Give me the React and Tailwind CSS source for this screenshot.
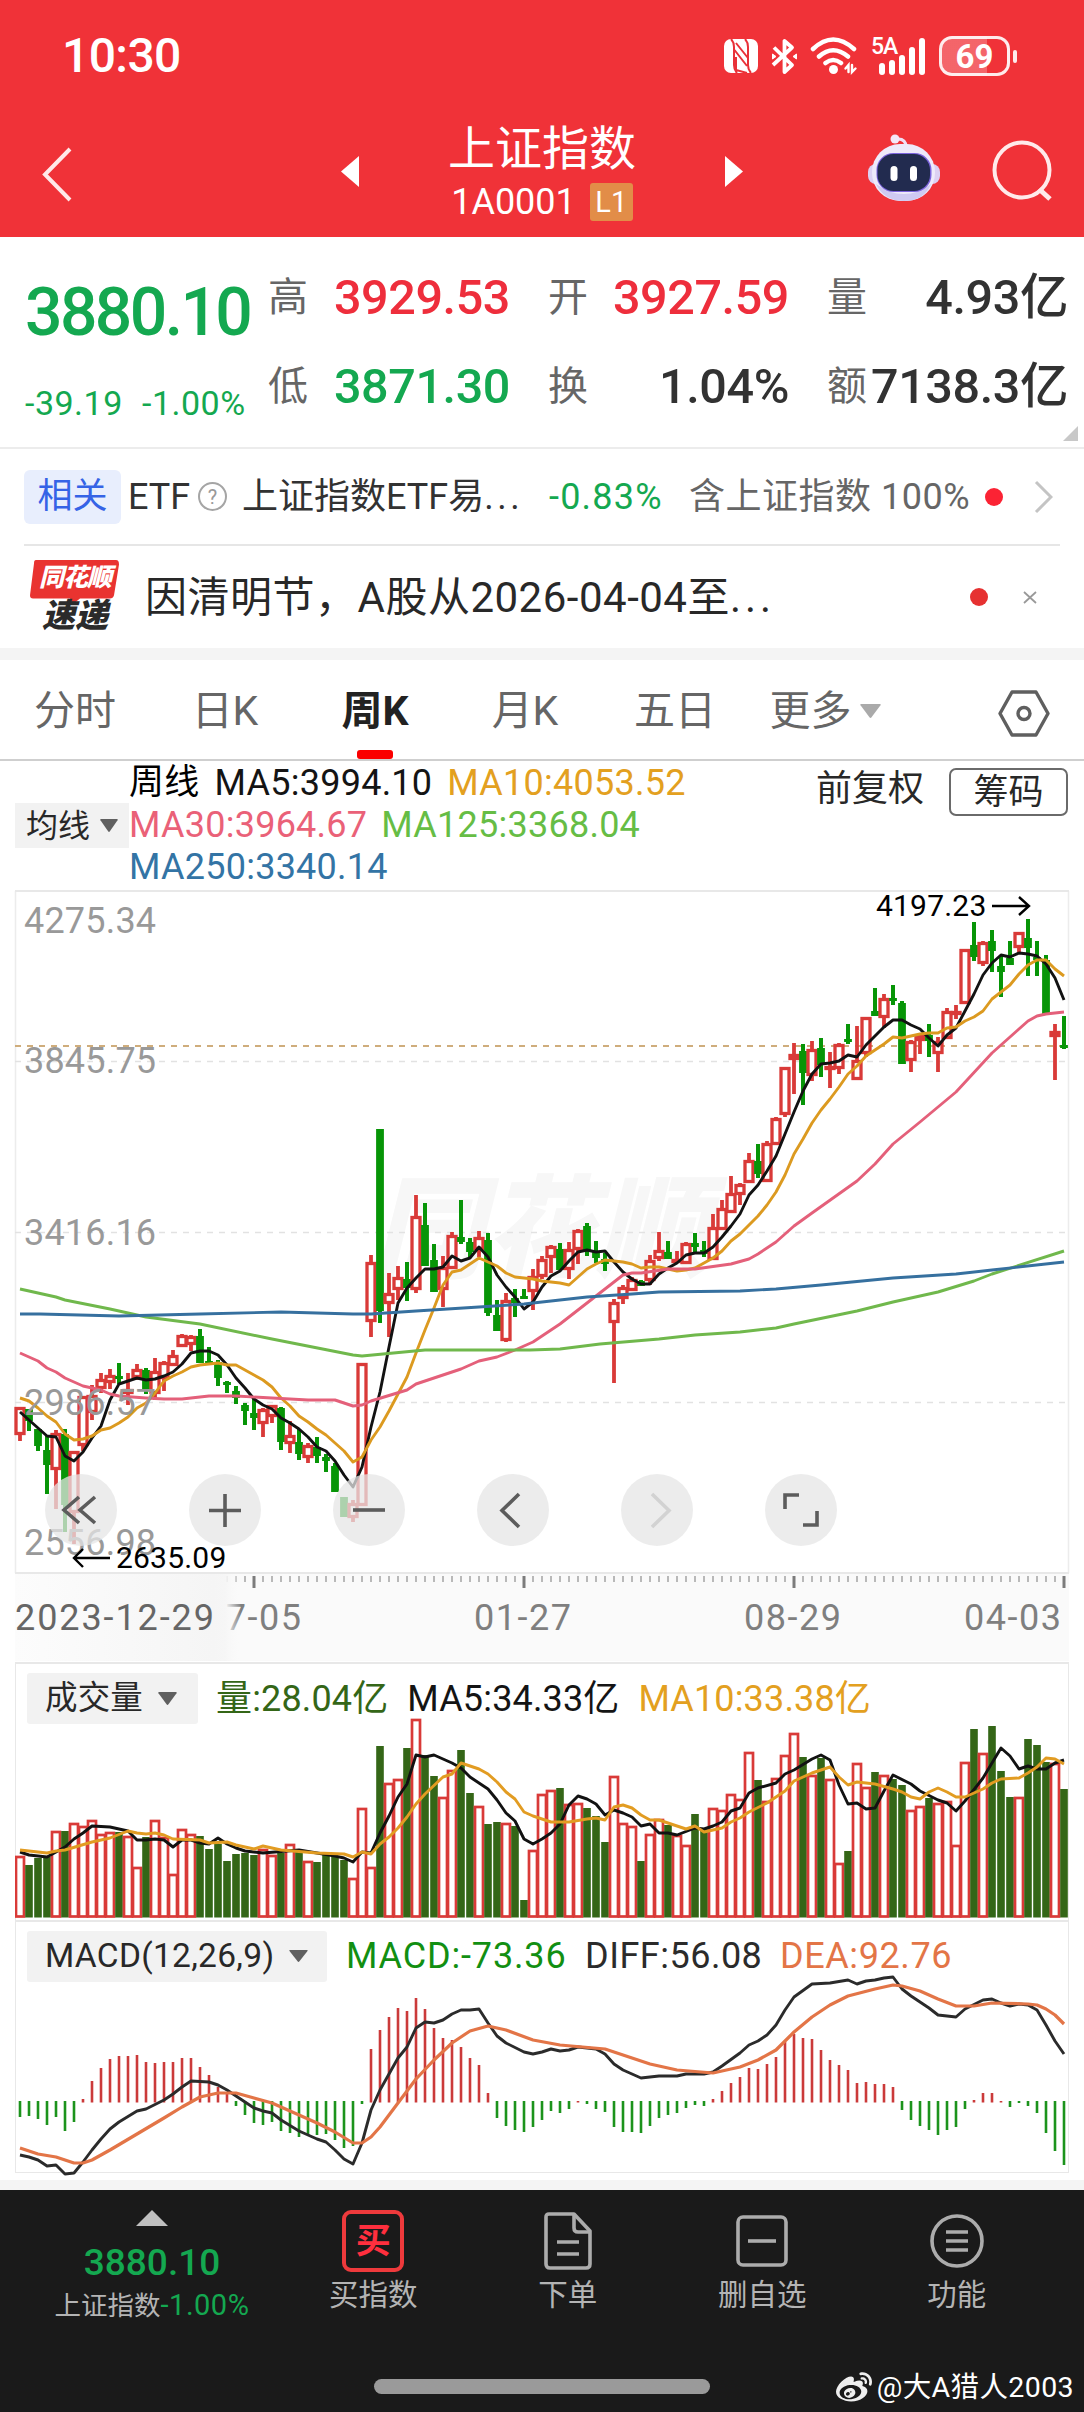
import React from 'react'
import { FaWeibo } from 'react-icons/fa'

// every chart shares the same x axis: 117 weeks, 9px apart
const STEP = 9
const xAt = (i) => 20 + i * STEP
const RED = '#d93a38'
const GREEN = '#079507'

// [up, high, bodyTop, bodyBottom, low]
const candles = [
  [1, 1408, 1408, 1434, 1441], [0, 1409, 1409, 1421, 1431], [0, 1429, 1429, 1446, 1451], [0, 1436, 1450, 1465, 1494],
  [1, 1430, 1434, 1469, 1509], [0, 1429, 1434, 1505, 1532], [1, 1451, 1452, 1512, 1544], [1, 1396, 1397, 1445, 1451],
  [1, 1385, 1396, 1412, 1420], [1, 1373, 1380, 1388, 1393], [1, 1369, 1376, 1382, 1389], [0, 1363, 1376, 1378, 1384],
  [1, 1373, 1390, 1393, 1405], [1, 1364, 1370, 1377, 1380], [0, 1368, 1370, 1389, 1394], [1, 1358, 1372, 1393, 1400],
  [1, 1361, 1363, 1378, 1391], [1, 1350, 1356, 1365, 1365], [1, 1334, 1336, 1346, 1347], [1, 1335, 1337, 1344, 1351],
  [0, 1329, 1336, 1363, 1363], [0, 1347, 1361, 1363, 1363], [0, 1360, 1362, 1378, 1386], [0, 1381, 1382, 1384, 1393],
  [0, 1386, 1391, 1398, 1404], [0, 1403, 1405, 1411, 1425], [0, 1398, 1413, 1418, 1430], [1, 1408, 1410, 1423, 1437],
  [1, 1405, 1406, 1416, 1423], [0, 1407, 1408, 1442, 1450], [1, 1421, 1436, 1443, 1453], [0, 1429, 1442, 1454, 1460],
  [1, 1443, 1446, 1457, 1463], [0, 1437, 1447, 1456, 1463], [0, 1454, 1457, 1461, 1472], [0, 1463, 1466, 1492, 1492],
  [0, 1497, 1497, 1517, 1517], [1, 1500, 1504, 1517, 1522], [1, 1363, 1364, 1505, 1505], [1, 1255, 1263, 1321, 1337],
  [0, 1129, 1129, 1311, 1323], [1, 1273, 1294, 1303, 1337], [1, 1266, 1278, 1289, 1300], [0, 1262, 1279, 1288, 1301],
  [1, 1195, 1217, 1289, 1293], [0, 1203, 1225, 1266, 1266], [0, 1244, 1260, 1292, 1292], [1, 1256, 1268, 1289, 1307],
  [1, 1232, 1236, 1268, 1268], [0, 1200, 1237, 1242, 1244], [0, 1238, 1242, 1252, 1258], [1, 1231, 1238, 1249, 1257],
  [0, 1233, 1240, 1313, 1316], [0, 1300, 1315, 1331, 1331], [1, 1293, 1301, 1340, 1342], [0, 1289, 1298, 1303, 1317],
  [0, 1289, 1296, 1299, 1299], [1, 1269, 1277, 1291, 1310], [1, 1256, 1260, 1276, 1279], [1, 1245, 1247, 1257, 1273],
  [0, 1243, 1249, 1270, 1270], [1, 1242, 1250, 1269, 1279], [1, 1229, 1231, 1249, 1264], [0, 1223, 1226, 1252, 1256],
  [0, 1241, 1252, 1258, 1263], [0, 1253, 1259, 1264, 1271], [1, 1299, 1303, 1322, 1383], [1, 1285, 1288, 1298, 1304],
  [1, 1277, 1280, 1290, 1290], [0, 1280, 1281, 1286, 1286], [1, 1255, 1261, 1280, 1285], [1, 1232, 1251, 1258, 1261],
  [0, 1241, 1252, 1259, 1259], [1, 1251, 1260, 1262, 1262], [1, 1242, 1244, 1263, 1263], [0, 1233, 1243, 1247, 1252],
  [0, 1241, 1250, 1254, 1257], [1, 1214, 1228, 1259, 1259], [1, 1200, 1209, 1229, 1229], [1, 1176, 1194, 1212, 1212],
  [1, 1183, 1185, 1194, 1205], [1, 1153, 1161, 1182, 1182], [0, 1144, 1161, 1174, 1178], [1, 1141, 1144, 1181, 1181],
  [1, 1117, 1119, 1144, 1145], [1, 1067, 1068, 1114, 1117], [1, 1043, 1055, 1059, 1094], [0, 1044, 1051, 1073, 1105],
  [1, 1041, 1050, 1075, 1081], [0, 1038, 1048, 1065, 1077], [1, 1052, 1067, 1069, 1088], [1, 1043, 1045, 1068, 1074],
  [0, 1024, 1039, 1042, 1044], [1, 1026, 1061, 1079, 1079], [1, 1017, 1018, 1053, 1057], [0, 988, 1011, 1016, 1016],
  [1, 994, 999, 1017, 1028], [0, 985, 998, 1001, 1005], [0, 1001, 1003, 1064, 1064], [1, 1040, 1042, 1060, 1072],
  [1, 1033, 1036, 1040, 1054], [0, 1024, 1035, 1041, 1057], [1, 1037, 1042, 1053, 1072], [1, 1008, 1012, 1038, 1038],
  [1, 1005, 1012, 1013, 1019], [1, 949, 950, 1003, 1004], [0, 922, 945, 957, 961], [1, 941, 943, 963, 966],
  [0, 930, 941, 951, 972], [0, 955, 966, 972, 997], [0, 941, 958, 965, 965], [1, 932, 933, 947, 954],
  [0, 919, 938, 948, 976], [0, 941, 957, 959, 976], [0, 955, 960, 1015, 1015], [1, 1024, 1032, 1036, 1080],
  [0, 1016, 1045, 1047, 1049],
]

const ma5 = [
  1412, 1420, 1428, 1436, 1437, 1456, 1461, 1452, 1438, 1426, 1400, 1384, 1381, 1378, 1380, 1379, 1376, 1372, 1364, 1353,
  1351, 1351, 1355, 1365, 1378, 1388, 1399, 1405, 1409, 1418, 1423, 1429, 1437, 1447, 1451, 1461, 1475, 1487, 1467, 1427,
  1392, 1347, 1303, 1288, 1278, 1269, 1269, 1267, 1256, 1261, 1258, 1247, 1257, 1275, 1287, 1297, 1309, 1302, 1287, 1276,
  1271, 1261, 1252, 1250, 1252, 1251, 1262, 1272, 1279, 1284, 1284, 1274, 1268, 1263, 1255, 1253, 1253, 1247, 1237, 1226,
  1214, 1195, 1185, 1171, 1156, 1134, 1112, 1091, 1074, 1064, 1063, 1061, 1055, 1057, 1045, 1036, 1027, 1020, 1020, 1025,
  1029, 1038, 1046, 1035, 1028, 1011, 994, 975, 963, 955, 957, 953, 954, 956, 964, 978, 1000,
]

const ma10 = [
  1398, 1401, 1408, 1416, 1422, 1434, 1440, 1439, 1436, 1430, 1428, 1423, 1417, 1408, 1403, 1393, 1381, 1376, 1372, 1367,
  1365, 1364, 1363, 1365, 1365, 1370, 1375, 1380, 1387, 1398, 1406, 1416, 1422, 1429, 1435, 1443, 1451, 1462, 1457, 1440,
  1427, 1411, 1394, 1377, 1353, 1330, 1308, 1285, 1272, 1270, 1264, 1258, 1262, 1266, 1273, 1277, 1278, 1279, 1281, 1282,
  1283, 1285, 1277, 1269, 1264, 1260, 1261, 1262, 1264, 1268, 1267, 1267, 1269, 1271, 1270, 1268, 1263, 1258, 1251, 1241,
  1234, 1225, 1216, 1205, 1192, 1175, 1154, 1139, 1123, 1110, 1099, 1087, 1074, 1066, 1056, 1050, 1044, 1037, 1038, 1036,
  1034, 1033, 1033, 1028, 1027, 1021, 1017, 1011, 999, 992, 985, 974, 965, 960, 960, 969, 976,
]

const ma30 = '20,1353 38,1361 47,1368 56,1372 65,1378 83,1386 101,1390 110,1394 119,1396 146,1398 164,1399 182,1399 209,1396 236,1396 272,1398 308,1400 335,1400 344,1403 353,1406 362,1405 371,1401 407,1390 416,1384 425,1381 461,1369 479,1361 497,1357 515,1350 533,1342 560,1324 623,1275 632,1273 641,1273 668,1269 695,1269 731,1264 749,1259 758,1254 776,1242 794,1226 812,1213 857,1181 875,1164 893,1144 920,1122 956,1092 992,1053 1010,1037 1028,1021 1037,1016 1046,1014 1064,1012'
const ma125 = '20,1289 56,1297 65,1300 110,1309 146,1317 200,1324 272,1339 353,1355 362,1356 425,1350 452,1350 530,1350 560,1349 600,1344 659,1339 695,1335 740,1332 776,1328 794,1324 857,1311 893,1302 938,1292 974,1281 992,1274 1064,1251'
const ma250 = '20,1314 40,1314 119,1316 200,1314 281,1312 353,1314 371,1314 416,1311 479,1307 524,1304 587,1297 632,1294 659,1292 740,1291 776,1289 821,1285 893,1278 956,1274 992,1270 1064,1262'

const volumes = [
  1856, 1865, 1858, 1857, 1831, 1831, 1823, 1826, 1820, 1834, 1832, 1832, 1836, 1867, 1837, 1820, 1837, 1874, 1829, 1834,
  1836, 1849, 1844, 1861, 1854, 1853, 1855, 1849, 1855, 1853, 1844, 1851, 1861, 1862, 1855, 1856, 1860, 1878, 1808, 1867,
  1746, 1783, 1779, 1748, 1719, 1755, 1776, 1797, 1770, 1750, 1793, 1806, 1824, 1822, 1823, 1826, 1900, 1850, 1794, 1790,
  1788, 1804, 1803, 1808, 1816, 1842, 1776, 1823, 1826, 1861, 1834, 1819, 1825, 1835, 1845, 1814, 1829, 1808, 1810, 1794,
  1799, 1752, 1780, 1801, 1778, 1755, 1733, 1757, 1775, 1758, 1779, 1863, 1851, 1763, 1787, 1772, 1775, 1779, 1785, 1810,
  1806, 1798, 1803, 1801, 1845, 1762, 1729, 1753, 1726, 1771, 1797, 1797, 1739, 1745, 1762, 1763, 1789,
]

const volMa5 = [
  [0, 1852], [1, 1855], [2, 1856], [3, 1857], [4, 1852], [5, 1847], [6, 1839], [7, 1833], [8, 1826], [10, 1827], [11, 1829],
  [12, 1831], [13, 1840], [14, 1840], [15, 1839], [16, 1840], [17, 1847], [18, 1840], [19, 1840], [20, 1843], [21, 1844],
  [22, 1838], [23, 1844], [24, 1848], [25, 1851], [27, 1853], [31, 1850], [33, 1853], [35, 1856], [36, 1858], [37, 1862],
  [38, 1852], [39, 1853], [40, 1833], [41, 1816], [42, 1797], [43, 1784], [44, 1755], [45, 1757], [46, 1755], [48, 1763],
  [49, 1768], [50, 1777], [52, 1789], [53, 1800], [54, 1813], [55, 1821], [56, 1839], [57, 1844], [58, 1839], [59, 1833],
  [60, 1824], [61, 1805], [62, 1796], [63, 1799], [64, 1804], [65, 1815], [66, 1810], [67, 1813], [68, 1817], [69, 1826],
  [70, 1824], [71, 1833], [72, 1833], [73, 1835], [75, 1828], [76, 1829], [77, 1826], [78, 1822], [79, 1811], [80, 1808],
  [81, 1793], [82, 1788], [84, 1783], [85, 1774], [86, 1770], [88, 1759], [89, 1755], [90, 1760], [91, 1785], [92, 1804],
  [93, 1803], [94, 1809], [95, 1808], [96, 1791], [97, 1775], [99, 1784], [100, 1791], [102, 1800], [103, 1803], [104, 1811],
  [105, 1801], [107, 1778], [108, 1763], [109, 1748], [110, 1756], [111, 1769], [112, 1766], [113, 1769], [114, 1769],
  [115, 1763], [116, 1760],
]
const volMa10 = [
  [0, 1850], [3, 1853], [4, 1851], [5, 1850], [8, 1842], [10, 1838], [12, 1831], [13, 1833], [14, 1834], [15, 1833],
  [16, 1835], [17, 1839], [20, 1840], [21, 1843], [23, 1842], [24, 1845], [25, 1847], [26, 1849], [27, 1846], [29, 1850],
  [33, 1853], [36, 1854], [37, 1857], [38, 1852], [39, 1854], [40, 1844], [41, 1837], [42, 1828], [43, 1817], [44, 1804],
  [45, 1794], [47, 1777], [48, 1774], [49, 1763], [51, 1769], [52, 1774], [53, 1782], [54, 1792], [55, 1799], [56, 1812],
  [57, 1816], [59, 1822], [61, 1822], [63, 1819], [64, 1818], [65, 1820], [66, 1807], [67, 1805], [68, 1808], [69, 1815],
  [70, 1820], [71, 1820], [74, 1829], [75, 1826], [76, 1832], [78, 1828], [79, 1822], [80, 1818], [81, 1812], [83, 1803],
  [84, 1797], [85, 1791], [86, 1781], [88, 1773], [90, 1767], [91, 1777], [92, 1785], [93, 1782], [95, 1784], [97, 1789],
  [98, 1792], [99, 1797], [100, 1799], [101, 1792], [102, 1788], [103, 1792], [104, 1797], [105, 1797], [107, 1789],
  [108, 1783], [109, 1779], [111, 1778], [112, 1773], [113, 1767], [114, 1758], [115, 1759], [116, 1764],
]

const macd = [
  2117, 2116, 2119, 2125, 2117, 2131, 2122, 2099, 2081, 2068, 2059, 2056, 2056, 2055, 2062, 2063, 2062, 2062, 2058, 2058,
  2067, 2075, 2087, 2093, 2106, 2115, 2123, 2125, 2122, 2131, 2133, 2137, 2135, 2135, 2134, 2140, 2148, 2146, 2104, 2049,
  2030, 2017, 2008, 2011, 1998, 2009, 2028, 2038, 2040, 2047, 2058, 2065, 2093, 2118, 2126, 2130, 2132, 2127, 2120, 2111,
  2113, 2109, 2101, 2104, 2109, 2112, 2127, 2132, 2132, 2133, 2126, 2118, 2115, 2113, 2108, 2105, 2106, 2099, 2091, 2083,
  2077, 2068, 2069, 2064, 2057, 2042, 2034, 2038, 2039, 2050, 2060, 2065, 2070, 2083, 2082, 2084, 2084, 2087, 2110, 2120,
  2126, 2130, 2135, 2130, 2127, 2109, 2100, 2093, 2093, 2101, 2107, 2103, 2106, 2113, 2133, 2151, 2165,
]
const diff = [
  [0, 2155], [1, 2157], [2, 2160], [3, 2166], [4, 2165], [5, 2174], [6, 2173], [7, 2162], [8, 2150], [9, 2139], [10, 2129],
  [11, 2122], [13, 2111], [14, 2109], [16, 2100], [17, 2094], [18, 2087], [19, 2081], [21, 2082], [22, 2085], [23, 2090],
  [24, 2096], [25, 2102], [26, 2108], [27, 2111], [28, 2113], [29, 2120], [31, 2131], [33, 2139], [34, 2142], [35, 2150],
  [36, 2159], [37, 2164], [38, 2143], [39, 2110], [40, 2090], [42, 2058], [43, 2047], [44, 2028], [45, 2022], [46, 2023],
  [47, 2020], [48, 2014], [49, 2010], [50, 2010], [51, 2009], [52, 2023], [53, 2036], [54, 2043], [56, 2052], [57, 2054],
  [58, 2052], [59, 2049], [60, 2051], [61, 2050], [62, 2047], [64, 2049], [65, 2054], [66, 2064], [67, 2070], [69, 2078],
  [71, 2076], [73, 2076], [74, 2074], [76, 2074], [77, 2072], [78, 2066], [80, 2053], [81, 2045], [82, 2041], [83, 2035],
  [84, 2025], [85, 2010], [86, 1997], [88, 1984], [90, 1983], [92, 1980], [93, 1984], [94, 1981], [95, 1980], [96, 1978],
  [97, 1977], [98, 1989], [99, 1996], [101, 2008], [102, 2015], [103, 2016], [104, 2017], [105, 2009], [107, 2000],
  [108, 1999], [109, 2003], [110, 2006], [111, 2004], [112, 2005], [113, 2010], [114, 2025], [115, 2041], [116, 2054],
]
const dea = [
  [0, 2148], [2, 2154], [4, 2157], [6, 2163], [7, 2163], [8, 2160], [10, 2150], [13, 2134], [16, 2118], [18, 2107],
  [20, 2097], [22, 2093], [24, 2093], [26, 2098], [28, 2103], [30, 2111], [33, 2123], [35, 2132], [37, 2143], [38, 2143],
  [39, 2137], [40, 2127], [42, 2103], [44, 2079], [46, 2060], [48, 2043], [50, 2031], [52, 2026], [54, 2030], [57, 2040],
  [60, 2045], [65, 2049], [67, 2055], [70, 2064], [73, 2070], [77, 2073], [80, 2067], [82, 2060], [84, 2050], [86, 2032],
  [88, 2017], [90, 2005], [92, 1996], [95, 1989], [97, 1985], [98, 1986], [100, 1991], [102, 1999], [104, 2006],
  [106, 2006], [108, 2003], [112, 2004], [113, 2005], [114, 2009], [115, 2015], [116, 2024],
]

const toPoints = (list) => list.map((p, i) => (Array.isArray(p) ? `${xAt(p[0])},${p[1]}` : `${xAt(i)},${p}`)).join(' ')

const Line = ({ points, color, width = 2.9 }) => (
  <polyline points={points} fill="none" stroke={color} strokeWidth={width} strokeLinejoin="round" />
)

const Caret = ({ className }) => (
  <svg className={className} viewBox="0 0 20 13" fill="currentColor" preserveAspectRatio="none" aria-hidden="true">
    <path d="M1 0h18q1.200 0 .5 1.200L11 12.300q-1 1.200-2 0L.5 1.200Q-.2 0 1 0z" />
  </svg>
)

const StatusBar = () => (
  <div className="flex h-[112px] items-center justify-between pl-[62px] pr-[67px] text-white">
    <span className="text-[48px] leading-none font-medium tracking-[-0.600px]">10:30</span>
    <div className="flex h-[42px] items-center">
      {/* NFC */}
      <svg className="h-[34px] w-[34px]" viewBox="0 0 34 34" aria-hidden="true">
        <rect x="0" y="0" width="34" height="34" rx="7" fill="#fff" />
        <path d="M7 0q3 3 3 8v18q0 5 3 8M27 34q-3-3-3-8V8q0-5-3-8M12 4l12 15M10.500 11L23 27M12 18v13l11 3" stroke="#e93138" strokeWidth="2" fill="none" />
      </svg>
      {/* Bluetooth */}
      <svg className="ml-[13px] h-[37px] w-[27px]" viewBox="0 0 27 37" fill="none" stroke="#fff" strokeWidth="3.800" aria-hidden="true">
        <path d="M2 27L21 9.500 13.500 3v31l7.500-7L3 9.500" strokeLinejoin="round" />
        <path d="M1.500 16l3.500 2.500L1.500 21zM25.500 16L22 18.500l3.500 2.500z" fill="#fff" strokeWidth="1" />
      </svg>
      {/* Wi-Fi */}
      <svg className="ml-[12px] h-[38px] w-[48px]" viewBox="0 0 48 38" fill="none" stroke="#fff" strokeWidth="4.500" strokeLinecap="round" aria-hidden="true">
        <path d="M3 12Q23-7 44 12M9 19.500Q23 7 38 19.500M15.500 26Q23 20 31 26" />
        <circle cx="23.500" cy="32.500" r="4.500" fill="#fff" stroke="none" />
        <path d="M38.500 35v-7l-3 3.500M42 28v7l3.500-3.500" strokeWidth="2.400" />
      </svg>
      {/* Signal */}
      <div className="relative ml-[13px] flex h-[38px] w-[54px] items-end justify-end gap-[4px]">
        <span className="absolute -top-[1px] left-0 text-[23px] leading-[22px] font-medium tracking-[-1px]">5A</span>
        <i className="h-[12px] w-[6px] rounded-full bg-white" />
        <i className="h-[15px] w-[6px] rounded-full bg-white" />
        <i className="h-[20px] w-[6px] rounded-full bg-white" />
        <i className="h-[28px] w-[6px] rounded-full bg-white" />
        <i className="h-[37px] w-[6px] rounded-full bg-white" />
      </div>
      {/* Battery */}
      <div className="ml-[14px] flex h-[40px] w-[71px] items-center justify-center rounded-[13px] border-[3px] border-white/90 bg-linear-to-r from-white/25 from-69% to-transparent to-69%">
        <span className="text-[33px] leading-none font-bold">69</span>
      </div>
      <i className="ml-[3px] h-[13px] w-[4px] rounded-full bg-white/90" />
    </div>
  </div>
)

const Robot = () => (
  <svg className="h-[70px] w-[74px]" viewBox="0 0 74 70" aria-hidden="true">
    <path d="M39 13q0-8-8-8" stroke="#f0dff4" strokeWidth="3" fill="none" />
    <circle cx="28" cy="5" r="4.500" fill="#f4e7f7" />
    <rect x="1" y="30" width="72" height="20" rx="8" fill="#dcd0f3" />
    <rect x="5" y="10" width="63" height="57" rx="28" fill="#eeeafa" />
    <path d="M9 50q28 20 55 0-7 17-27 17T9 50z" fill="#cfcaf2" />
    <rect x="9.500" y="19" width="55" height="39" rx="17" fill="#7b63dd" />
    <rect x="10.500" y="20" width="52.500" height="37" rx="16" fill="#222b4f" />
    <rect x="23.500" y="32" width="7" height="15" rx="3.500" fill="#fff" />
    <rect x="43" y="32" width="7" height="15" rx="3.500" fill="#fff" />
  </svg>
)

const TitleBar = () => (
  <div className="flex h-[125px] text-white">
    <svg className="mt-[34px] ml-[41px] h-[57px] w-[32px]" viewBox="0 0 32 57" fill="none" stroke="#ffe9e9" strokeWidth="4" aria-hidden="true">
      <path d="M29 3L4 28.500 29 54" />
    </svg>
    <svg className="mt-[44px] ml-[268px] h-[31px] w-[18px]" viewBox="0 0 18 31" fill="#fff" aria-hidden="true">
      <path d="M18 0v31L0 15.500z" />
    </svg>
    <div className="flex w-[366px] flex-col items-center pt-[11px]">
      <h1 className="text-[47px] leading-[52px]">上证指数</h1>
      <div className="mt-[8px] flex items-center gap-[14px]">
        <span className="text-[36px] leading-[38px]">1A0001</span>
        <span className="flex h-[38px] w-[43px] items-center justify-center rounded-[3px] bg-[#e28d48] text-[29px] leading-none">L1</span>
      </div>
    </div>
    <svg className="mt-[44px] h-[31px] w-[18px]" viewBox="0 0 18 31" fill="#fff" aria-hidden="true">
      <path d="M0 0v31l18-15.500z" />
    </svg>
    <div className="mt-[22px] ml-[124px]">
      <Robot />
    </div>
    <svg className="mt-[27px] ml-[50px] h-[64px] w-[64px]" viewBox="0 0 64 64" fill="none" stroke="#ffeaea" strokeWidth="4" aria-hidden="true">
      <circle cx="31" cy="31" r="27.500" />
      <path d="M48 50l11 10" strokeWidth="5" />
    </svg>
  </div>
)

const Cell = ({ label, value, className }) => (
  <div className="flex items-center justify-between">
    <span className="text-[40px] text-[#666]">{label}</span>
    <span className={`text-[48.500px] font-medium tracking-[-0.400px] whitespace-nowrap ${className}`}>{value}</span>
  </div>
)

const Quote = () => (
  <div className="relative flex h-[212px] border-b-2 border-[#ececec] pl-[25px] leading-none">
    <div className="w-[243px] text-[#14a850]">
      <div className="pt-[43px] text-[66px] font-medium tracking-[-2.600px]">3880.10</div>
      <div className="mt-[40px] flex gap-[16px] text-[34px] tracking-[0.500px] whitespace-nowrap">
        <span className="w-[101px]">-39.19</span>
        <span>-1.00%</span>
      </div>
    </div>
    <div className="grid h-[148px] w-[799px] grid-cols-[242px_241px_241px] grid-rows-[60px_60px] gap-x-[38px] gap-y-[29px] pt-[31px]">
      <Cell label="高" value="3929.53" className="text-[#ee2e3c]" />
      <Cell label="开" value="3927.59" className="text-[#ee2e3c]" />
      <Cell label="量" value="4.93亿" className="text-[#323232]" />
      <Cell label="低" value="3871.30" className="text-[#14a850]" />
      <Cell label="换" value="1.04%" className="text-[#323232]" />
      <Cell label="额" value="7138.3亿" className="text-[#323232]" />
    </div>
    <svg className="absolute right-[6px] bottom-[6px] h-[15px] w-[15px]" viewBox="0 0 15 15" aria-hidden="true">
      <path d="M15 0v15H0z" fill="#c8c8c8" />
    </svg>
  </div>
)

const RelatedRow = () => (
  <div className="mx-[24px] flex h-[97px] items-center border-b-2 border-[#e6e6e6] text-[36px] leading-none whitespace-nowrap text-[#323232]">
    <span className="flex h-[54px] w-[97px] items-center justify-center rounded-[6px] bg-[#e8eefd] text-[35px] text-[#3563e6]">相关</span>
    <span className="ml-[7px] w-[60px]">ETF</span>
    <span className="ml-[10px] flex h-[29px] w-[29px] items-center justify-center rounded-full border-2 border-[#a5a5a5] text-[20px] text-[#999]">?</span>
    <span className="ml-[15px] w-[276px]">上证指数ETF易<span className="tracking-[3.500px]">...</span></span>
    <span className="ml-[31px] w-[115px] tracking-[1.200px]">
      <span className="text-[#14a850]">-0.83%</span>
    </span>
    <span className="ml-[25px] w-[286px] tracking-[0.500px] text-[#666]">含上证指数 100%</span>
    <i className="ml-[10px] h-[18px] w-[18px] rounded-full bg-[#fb2334]" />
    <svg className="ml-[31px] h-[34px] w-[19px]" viewBox="0 0 19 34" fill="none" stroke="#c4c4c4" strokeWidth="3" aria-hidden="true">
      <path d="M2 2l15 15L2 32" />
    </svg>
  </div>
)

const NewsRow = () => (
  <div className="flex h-[102px] items-center pl-[30px] whitespace-nowrap">
    <div className="relative flex w-[90px] flex-col items-center font-black italic">
      <svg className="absolute top-0 left-0 h-[46px] w-[90px]" viewBox="0 0 90 42" preserveAspectRatio="none" fill="#e93330" aria-hidden="true">
        <path d="M6 1h80q3 0 3 4l-5 28q-1 3-4 3H50l-7 5-3-5H3q-3 0-3-3L4 4q0-3 2-3z" />
      </svg>
      <span className="relative text-[25px] leading-[38px] tracking-[-1px] text-white">同花顺</span>
      <span className="relative text-[33px] leading-[38px] text-[#2b2b2b]">速递</span>
    </div>
    <p className="ml-[25px] w-[641px] text-[42px] tracking-[0.500px] text-[#282828]">
      因清明节，A股从2026-04-04至<span className="tracking-[4px]">...</span>
    </p>
    <i className="ml-[184px] h-[18px] w-[18px] rounded-full bg-[#e63131]" />
    <svg className="ml-[35px] h-[13px] w-[14px]" viewBox="0 0 14 13" stroke="#999" strokeWidth="1.800" aria-hidden="true">
      <path d="M1 1l12 11M13 1L1 12" />
    </svg>
  </div>
)

const tabs = ['分时', '日K', '周K', '月K', '五日', '更多']

const Tabs = () => (
  <div className="flex h-[101px] border-b-2 border-[#cfcfcf] text-[41px] leading-none text-[#666]">
    {tabs.map((tab) => (
      <div key={tab} className="relative flex w-[150px] items-center justify-center">
        <span className={`pt-[4px] ${tab === '周K' ? 'font-bold text-[#222]' : ''}`}>{tab}</span>
        {tab === '更多' && <Caret className="mt-[2px] ml-[8px] h-[14px] w-[21px] text-[#aaa]" />}
        {tab === '周K' && <i className="absolute bottom-0 h-[9px] w-[36px] rounded-[3px] bg-[#fb0000]" />}
      </div>
    ))}
    <svg className="mt-[30px] ml-[98px] h-[47px] w-[52px]" viewBox="0 0 52 47" fill="none" stroke="#5f5f5f" strokeWidth="3.400" strokeLinejoin="round" aria-hidden="true">
      <path d="M14 2h24l12 21.500L38 45H14L2 23.500z" />
      <circle cx="26" cy="23.500" r="6" />
    </svg>
  </div>
)

const MaLegend = () => (
  <div className="flex h-[129px] items-start pl-[15px] leading-none whitespace-nowrap">
    <div className="mt-[42px] flex h-[45px] w-[114px] items-center justify-center gap-[10px] bg-[#f2f2f2] text-[32px] text-[#282828]">
      均线
      <Caret className="h-[13px] w-[18px] text-[#606060]" />
    </div>
    <div className="w-[680px] pt-px text-[36px] leading-[42px] tracking-[0.250px]">
      <div className="flex gap-[15px]">
        <span className="text-[35px]">周线</span>
        <span className="text-[#141414]">MA5:3994.10</span>
        <span className="text-[#e3a020]">MA10:4053.52</span>
      </div>
      <div className="flex gap-[14px]">
        <span className="text-[#ea6178]">MA30:3964.67</span>
        <span className="text-[#66bd45]">MA125:3368.04</span>
      </div>
      <div className="text-[#3374a5]">MA250:3340.14</div>
    </div>
    <span className="mt-[10px] ml-[7px] text-[36px] text-[#282828]">前复权</span>
    <span className="mt-[7px] ml-[25px] flex h-[48px] w-[119px] items-center justify-center rounded-[7px] border-2 border-[#6a6a6a] text-[35px] text-[#282828]">筹码</span>
  </div>
)

const Candle = ({ i, data }) => {
  const [up, high, top, bottom, low] = data
  const x = xAt(i)
  if (!up) {
    return (
      <g fill={GREEN}>
        <rect x={x - 2} y={high} width="4" height={low - high} />
        <rect x={x - 3.900} y={top} width="7.800" height={Math.max(bottom - top, 3)} />
      </g>
    )
  }
  const flat = bottom - top < 6
  return (
    <g>
      <path d={`M${x} ${high}V${top}M${x} ${bottom}V${low}`} stroke={RED} strokeWidth="3.800" />
      <rect x={x - 4} y={top + 0.500} width="8" height={Math.max(bottom - top - 1, 1)} fill={flat ? RED : '#fff'} stroke={RED} strokeWidth="3.300" />
    </g>
  )
}

const priceLabels = [['4275.34', 933], ['3845.75', 1073], ['3416.16', 1245], ['2986.57', 1415], ['2556.98', 1555]]

const controls = [
  { name: 'rewind', d: 'M34 23L19 36l15 13M50 23L35 36l15 13', color: '#5c5c5c' },
  { name: 'zoom-in', d: 'M36 20v33M20 36.500h32', color: '#5c5c5c' },
  { name: 'zoom-out', d: 'M20 36h32', color: '#5c5c5c' },
  { name: 'prev', d: 'M42 20L25 36.500 42 53', color: '#5c5c5c' },
  { name: 'next', d: 'M31 20l17 16.500L31 53', color: '#d2d2d2' },
  { name: 'fullscreen', d: 'M20 35V21h14M52 37v14H38', color: '#5c5c5c' },
]

const PriceChart = () => (
  <div className="relative h-[684px]">
    <svg className="block h-[684px] w-full" viewBox="0 890 1084 684">
      <text x="372" y="1269" fontSize="112" fontWeight="900" fill="#f7f7f7" fontStyle="italic">同花顺</text>
      <path d="M15.500 1573V891M1068.500 1573V891" stroke="#ececec" strokeWidth="1.500" />
      <path d="M15 891H1069M15 1573H1069" stroke="#e8e8e8" strokeWidth="2" />
      <path d="M15 1061.500H1068M15 1232.500H1068M15 1402.500H1068" stroke="#e2e2e2" strokeWidth="1.500" strokeDasharray="6 6" />
      <path d="M15 1046H1068" stroke="#cfad7c" strokeWidth="1.800" strokeDasharray="6 6" />
      {candles.map((c, i) => <Candle key={i} i={i} data={c} />)}
      <Line points={toPoints(ma5)} color="#121212" />
      <Line points={toPoints(ma10)} color="#dc9a20" />
      <Line points={ma30} color="#e4607a" />
      <Line points={ma125} color="#70b84c" />
      <Line points={ma250} color="#36709f" />
      <g fill="#999" fontSize="36" letterSpacing="0.2">
        {priceLabels.map(([label, y]) => <text key={label} x="24" y={y}>{label}</text>)}
      </g>
      <g fontSize="30" fill="#000" letterSpacing="0.2">
        <text x="876" y="916">4197.23</text>
        <text x="116" y="1568">2635.09</text>
      </g>
      <g fill="none" stroke="#000" strokeWidth="2.400">
        <path d="M992 906h36M1019 897l10 9-10 9" />
        <path d="M110 1558H74M83 1549l-9 9 9 9" />
      </g>
    </svg>
    <div className="absolute top-[584px] left-[45px] flex gap-[72px]">
      {controls.map((c) => (
        <button key={c.name} aria-label={c.name} className="h-[72px] w-[72px] rounded-full bg-[#e6e6e6]/75">
          <svg viewBox="0 0 72 72" fill="none" stroke={c.color} strokeWidth="3.600">
            <path d={c.d} />
          </svg>
        </button>
      ))}
    </div>
  </div>
)

const TimeAxis = () => (
  <div className="mx-[15px] h-[87px] bg-[#fafafa]">
    <svg className="block h-full w-full" viewBox="15 1574 1054 87">
      {candles.map((_, i) => {
        const major = i % 30 === 26
        return <path key={i} d={`M${xAt(i)} 1576V${major ? 1588 : 1582}`} stroke={major ? '#7c7c7c' : '#b9b9b9'} strokeWidth={major ? 3 : 2} />
      })}
      <g fontSize="36" fill="#7f7f7f" letterSpacing="1.500">
        <text x="204" y="1630">07-05</text>
        <text x="474" y="1630">01-27</text>
        <text x="744" y="1630">08-29</text>
        <text x="964" y="1630">04-03</text>
      </g>
      <defs>
        <linearGradient id="axisFade">
          <stop offset="0" stopColor="#fcfcfc" />
          <stop offset="0.880" stopColor="#f5f5f5" />
          <stop offset="0.930" stopColor="#f6f6f6" />
          <stop offset="1" stopColor="#fafafa" stopOpacity="0" />
        </linearGradient>
      </defs>
      <rect x="15" y="1574" width="226" height="87" fill="url(#axisFade)" />
      <text x="15" y="1630" fontSize="36" fill="#666" letterSpacing="1.900">2023-12-29</text>
    </svg>
  </div>
)

const VolumePanel = () => (
  <div className="relative mx-[15px] h-[258px] border-x border-t-2 border-[#e8e8e8]">
    <svg className="absolute -left-px -top-[2px] h-[258px] w-[1054px]" viewBox="15 1662 1054 258">
      {volumes.map((y, i) => candles[i][0]
        ? <rect key={i} x={xAt(i) - 4} y={y + 1} width="8" height={1915.500 - y} fill="#fff" stroke={RED} strokeWidth="2.700" />
        : <rect key={i} x={xAt(i) - 3.800} y={y} width="7.600" height={1917.500 - y} fill="#346617" />)}
      <Line points={toPoints(volMa5)} color="#121212" />
      <Line points={toPoints(volMa10)} color="#e29c22" />
    </svg>
    <div className="relative flex h-[70px] items-center pl-[11px] text-[36px] leading-none tracking-[0.150px] whitespace-nowrap">
      <div className="mt-[-1px] flex h-[51px] w-[171px] items-center rounded-[3px] bg-[#f2f2f2] pl-[18px] text-[32.500px] text-[#282828]">
        成交量
        <Caret className="ml-[15px] h-[13px] w-[19px] text-[#606060]" />
      </div>
      <span className="ml-[18px] text-[#346617]">量:28.04亿</span>
      <span className="ml-[19px] text-[#141414]">MA5:34.33亿</span>
      <span className="ml-[19px] text-[#e3a020]">MA10:33.38亿</span>
    </div>
  </div>
)

const MacdPanel = () => (
  <div className="relative mx-[15px] h-[253px] border border-t-2 border-[#e8e8e8]">
    <svg className="absolute -left-px -top-[2px] h-[256px] w-[1054px]" viewBox="15 1920 1054 256">
      {macd.map((y, i) => (
        <path key={i} d={`M${xAt(i)} ${y < 2102 ? 2102.500 : 2101}V${y}`} stroke={y < 2102 ? '#cb3a3a' : '#1c931c'} strokeWidth="2.600" />
      ))}
      <Line points={toPoints(diff)} color="#2b2b2b" />
      <Line points={toPoints(dea)} color="#e37547" width={3.200} />
    </svg>
    <div className="relative flex h-[68px] items-center pl-[11px] text-[36px] leading-none whitespace-nowrap">
      <div className="flex h-[51px] w-[300px] items-center rounded-[3px] bg-[#f2f2f2] pl-[18px] text-[33.500px] tracking-[0.300px] text-[#282828]">
        MACD(12,26,9)
        <Caret className="ml-[15px] h-[12px] w-[19px] text-[#606060]" />
      </div>
      <span className="ml-[19px] w-[221px] tracking-[0.850px] text-[#128f12]">MACD:-73.36</span>
      <span className="ml-[18px] w-[178px] tracking-[0.500px] text-[#2b2b2b]">DIFF:56.08</span>
      <span className="ml-[17px] tracking-[0.600px] text-[#e37547]">DEA:92.76</span>
    </div>
  </div>
)

const NavItem = ({ label, children }) => (
  <div className="flex w-[194.500px] flex-col items-center">
    <div className="flex h-[62px] items-center">{children}</div>
    <span className="mt-[5px] text-[29.500px] leading-[36px] text-[#b4b4b4]">{label}</span>
  </div>
)

const BottomBar = () => (
  <div className="relative flex h-[223px] bg-[#1a1a1a] pt-[20px]">
    <div className="flex w-[276px] flex-col items-center pl-[28px] leading-none whitespace-nowrap">
      <svg className="h-[16px] w-[32px]" viewBox="0 0 32 16" fill="#c0c0c0" aria-hidden="true">
        <path d="M16 0l16 16H0z" />
      </svg>
      <span className="mt-[18px] text-[37px] font-medium text-[#14a850]">3880.10</span>
      <span className="mt-[10px] text-[26.500px] text-[#b4b4b4]">上证指数<span className="text-[29px] tracking-[0.500px] text-[#14a850]">-1.00%</span></span>
    </div>
    <NavItem label="买指数">
      <span className="flex h-[62px] w-[62px] items-center justify-center rounded-[9px] border-[4px] border-[#ee3a3c] text-[35px] leading-none font-bold text-[#ff2f3e]">买</span>
    </NavItem>
    <NavItem label="下单">
      <svg className="h-[58px] w-[48px]" viewBox="0 0 48 58" fill="none" stroke="#acacac" strokeWidth="3.600" strokeLinejoin="round" aria-hidden="true">
        <path d="M5 2h25l16 17v33q0 4-4 4H6q-4 0-4-4V5q0-3 3-3z" />
        <path d="M30 2v14q0 4 4 4h12M13 30h22M13 42h22" />
      </svg>
    </NavItem>
    <NavItem label="删自选">
      <svg className="h-[52px] w-[52px]" viewBox="0 0 52 52" fill="none" stroke="#acacac" strokeWidth="3.600" aria-hidden="true">
        <rect x="2" y="2" width="48" height="48" rx="5" />
        <path d="M12 26h28" />
      </svg>
    </NavItem>
    <NavItem label="功能">
      <svg className="h-[54px] w-[54px]" viewBox="0 0 54 54" fill="none" stroke="#acacac" strokeWidth="3.600" aria-hidden="true">
        <circle cx="27" cy="27" r="25" />
        <path d="M16 18h22M16 27h22M16 36h22" />
      </svg>
    </NavItem>
    <i className="absolute top-[189px] left-[374px] h-[15px] w-[336px] rounded-full bg-[#9a9a9a]" />
    <div className="absolute top-[180px] right-[10px] flex items-center gap-[4px] text-[28.500px] leading-[36px] tracking-[0.400px] whitespace-nowrap text-white">
      <FaWeibo className="h-[36px] w-[38px] text-[#eee]" />
      @大A猎人2003
    </div>
  </div>
)

export default function App() {
  return (
    <div className="h-[2412px] w-[1084px] overflow-hidden bg-white font-['Roboto','Noto_Sans_CJK_SC',sans-serif] text-black">
      <div className="h-[237px] bg-[#f03238]">
        <StatusBar />
        <TitleBar />
      </div>
      <Quote />
      <RelatedRow />
      <NewsRow />
      <div className="h-[12px] bg-[#f4f4f4]" />
      <Tabs />
      <MaLegend />
      <PriceChart />
      <TimeAxis />
      <div className="h-px" />
      <VolumePanel />
      <MacdPanel />
      <div className="mt-[7px] h-[10px] bg-[#f4f4f4]" />
      <BottomBar />
    </div>
  )
}
